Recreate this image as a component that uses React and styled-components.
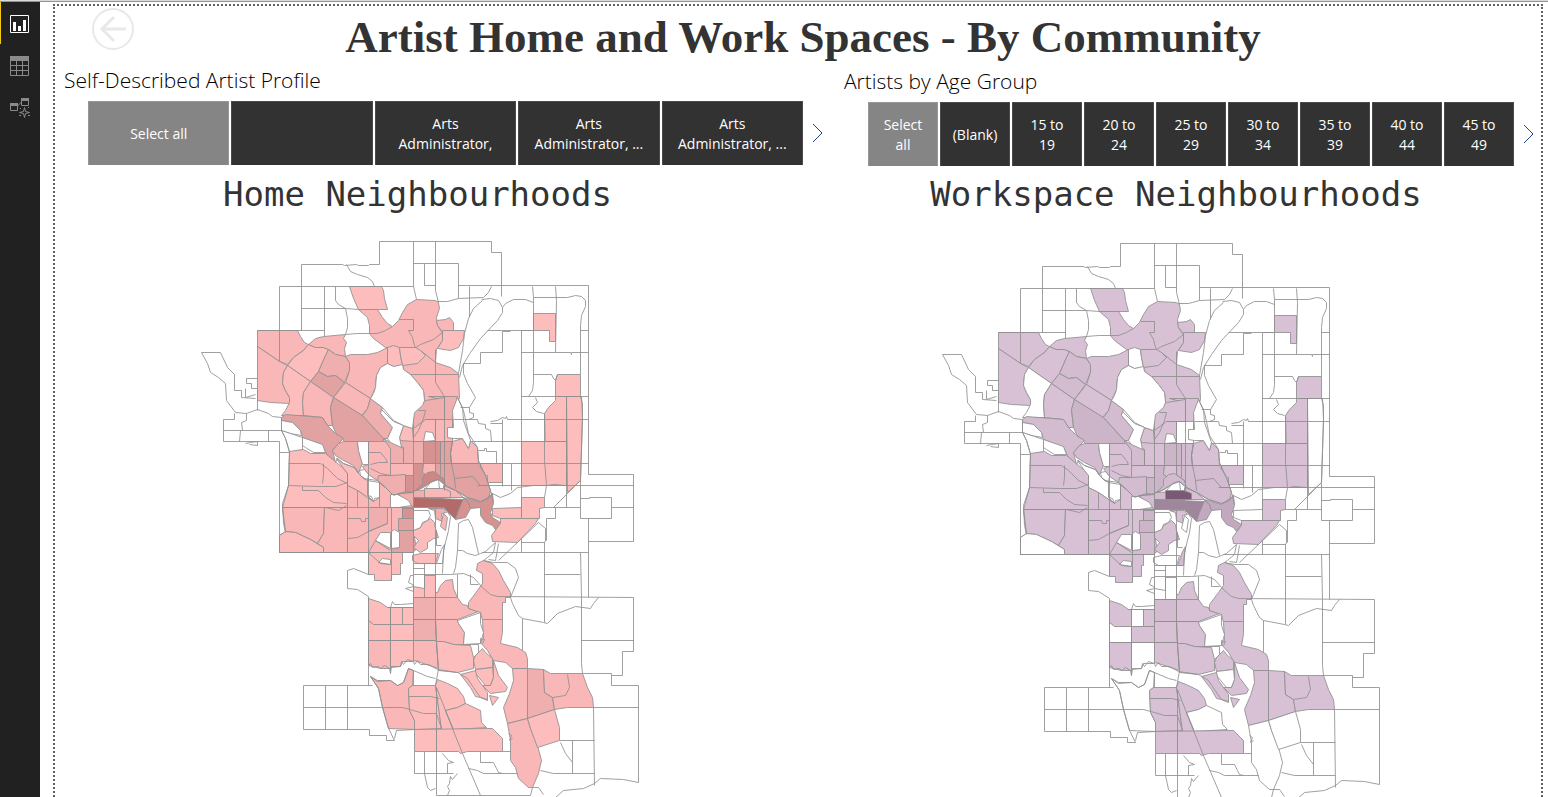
import React from "react";
import styled, { createGlobalStyle } from "styled-components";

const GlobalStyle = createGlobalStyle`
  * { box-sizing: border-box; }
  html, body { margin: 0; padding: 0; background: #fff; }
  body { overflow: hidden; font-family: "Open Sans", "Noto Sans", sans-serif; color: #333; }
  button { font: inherit; border: 0; padding: 0; margin: 0; background: none; cursor: pointer; }
`;

const Page = styled.div`
  display: flex;
  flex-direction: column;
  height: 100vh;
`;

const TopEdge = styled.div`
  flex: none;
  height: 2px;
  background: #d9d9d9;
  border-bottom: 1px solid #959595;
`;

const Body = styled.div`
  flex: 1;
  min-height: 0;
  display: flex;
`;

const Sidebar = styled.nav`
  flex: none;
  width: 40px;
  background: #212121;
  display: flex;
  flex-direction: column;
`;

const ViewButton = styled.button`
  height: 42px;
  width: 40px;
  display: flex;
  align-items: center;
  padding-top: 2px;
  padding-left: 9px;
  border-left: 1px solid ${(p) => (p.$active ? "#f2c811" : "transparent")};
  color: ${(p) => (p.$active ? "#fff" : "#8a8a8a")};
`;

const Canvas = styled.main`
  flex: 1;
  min-width: 0;
  margin: 2px 5px 0 13px;
  border: 2px dotted #606060;
  border-bottom: 0;
  overflow: hidden;
`;

const Header = styled.header`
  display: grid;
  grid-template-columns: 42px 1fr 69px;
  padding-left: 37px;
  height: 59px;
  align-items: start;
`;

const BackButton = styled.button`
  width: 42px;
  height: 42px;
  margin-top: 2px;
`;

const Title = styled.h1`
  margin: 0;
  text-align: center;
  font-family: "Liberation Serif", serif;
  font-weight: 700;
  font-size: 45px;
  line-height: 62px;
  color: #333;
  white-space: nowrap;
`;

const Slicers = styled.div`
  display: grid;
  grid-template-columns: 780fr 697fr;
  padding-left: 9px;
`;

const Slicer = styled.section`
  padding-top: ${(p) => p.$drop || 0}px;
`;

const SlicerTitle = styled.h2`
  margin: 0;
  font-weight: 300;
  font-size: 21px;
  line-height: 30px;
  color: #000;
`;

const SlicerRow = styled.div`
  display: flex;
  align-items: center;
  padding-left: 24px;
  padding-right: ${(p) => p.$end}px;
  margin-top: 6px;
`;

const Tiles = styled.div`
  flex: 1;
  display: grid;
  grid-auto-flow: column;
  grid-auto-columns: 1fr;
  gap: 2px;
`;

const Tile = styled.button`
  height: 64px;
  background: ${(p) => (p.$selected ? "#858585" : "#323232")};
  border: 1px solid ${(p) => (p.$selected ? "#979797" : "#4a4a4a")};
  border-bottom: 0;
  color: #fff;
  font-size: 14px;
  line-height: 20px;
  text-align: center;
`;

const NextButton = styled.button`
  width: 12px;
  height: 22px;
  margin-left: 9px;
`;

const Maps = styled.div`
  display: grid;
  grid-template-columns: 1fr 1fr;
`;

const MapPanel = styled.section`
  padding-right: ${(p) => p.$end}px;
`;

const MapTitle = styled.h2`
  margin: 0;
  height: ${(p) => p.$height}px;
  padding-left: ${(p) => p.$before || 0}px;
  padding-right: ${(p) => p.$after || 0}px;
  text-align: center;
  font-family: "DejaVu Sans Mono", monospace;
  font-weight: 400;
  font-size: 34px;
  line-height: 56px;
  color: #333;
  white-space: nowrap;
`;

const MapSvg = styled.svg`
  display: block;
  margin: 0 auto;
  width: 440px;
  height: 557px;
`;

/* Colour scales of the two maps, from the lightest to the strongest count. */
const HOME = ["#fff", "#fdbdbd", "#f9b7b7", "#efafaf", "#e1a2a1", "#d59290", "#cc8887", "#b36b6a"];
const WORK = ["#fff", "#d8c1d5", "#d3bbd0", "#ccb4c9", "#c3a9c0", "#a68ea3", "#9f869c", "#7b5876"];

/* Each area: outline, home level, workspace level. */
const AREAS = [
  // north west
  ["349,286 381,286 383,290 384,298 387,309 358,309 353,298", 1, 1],
  ["358,309 377,309 382,317 387,323 392,326 398,320 402,312 407,304 416,299 435,300 438,302 439,308 436,317 437,325 442,333 442,340 436,349 435,362 450,367 458,373 459,397 457,403 453,412 452,441 413,441 412,428 414,412 422,405 424,400 423,390 417,382 410,374 403,369 402,364 393,366 387,363 387,347 385,347 373,338 369,333 369,325 367,317", 2, 1],
  ["387,347 393,345 399,347 400,355 402,365 393,366 387,363", 1, 0],
  ["399,347 415,347 420,350 425,355 417,363 402,365 400,355", 1, 1],
  ["436,320 445,319 449,317 453,322 453,330 442,331 437,325", 2, 1],
  ["442,330 464,330 463,338 458,347 450,350 437,348 442,340", 1, 1],
  ["257,330 297,330 300,336 304,342 308,344 303,350 293,357 287,364 279,361 257,346", 2, 1],
  ["257,346 279,361 287,365 283,372 282,383 285,390 289,397 289,403 270,402 257,400", 2, 1],
  ["287,365 293,357 303,350 308,344 315,347 323,347 328,349 325,355 318,371 310,381", 1, 1],
  ["287,365 310,381 303,392 302,402 303,415 281,415 285,410 289,402 289,397 285,390 282,383 283,372", 1, 0],
  ["308,344 315,338 323,336 345,334 343,338 346,342 344,348 345,356 335,354 328,349 323,347 315,347", 2, 1],
  ["328,349 335,354 345,356 349,362 349,370 344,382 335,375 327,376 318,371 325,355", 3, 2],
  ["318,371 327,376 335,375 344,382 333,397 310,381", 4, 2],
  ["345,356 350,354 367,354 377,352 387,347 387,363 380,367 376,375 375,387 370,398 345,382 349,370 349,362", 2, 1],
  ["345,382 370,398 367,408 361,415 333,397", 2, 1],
  ["310,381 333,397 330,407 332,425 327,425 322,417 303,415 302,402 303,392", 2, 1],
  ["333,397 362,415 383,438 383,441 344,441 335,432 332,425 330,407", 4, 3],
  ["370,398 382,407 380,413 392,427 387,438 383,438 362,415 367,408", 3, 2],
  ["281,417 285,414 310,416 322,417 327,425 335,433 343,438 338,443 332,450 335,462 327,455 322,445 310,440 302,437 300,430 292,422 281,420", 4, 2],
  ["343,441 357,441 358,450 362,463 358,472 353,465 343,460 335,455 332,450 338,443", 3, 2],
  // west
  ["289,450 303,449 310,453 325,453 336,462 343,468 347,473 347,552 279,552 279,535 285,531 282,507 288,485", 1, 1],
  ["282,507 324,507 323,533 317,543 310,539 295,532 285,531", 2, 1],
  ["324,507 347,507 347,552 323,552 323,547 317,543 323,533", 2, 1],
  ["279,535 285,531 295,532 310,539 323,547 323,552 279,552", 1, 0],
  ["336,458 343,463 354,467 358,473 363,478 367,480 367,495 373,501 357,490 347,485 347,473 343,468", 1, 0],
  ["347,485 357,490 373,501 379,497 379,482 385,487 393,495 413,492 413,552 347,552", 2, 1],
  ["368,441 383,441 390,442 401,447 403,463 413,463 413,492 393,495 385,487 377,480 368,474 362,466 368,464", 2, 1],
  ["383,438 390,442 392,442 403,447 403,463 390,463 390,448", 3, 2],
  ["378,475 390,475 405,474 405,491 393,495 385,487 377,480", 3, 2],
  ["403,425 412,428 413,441 423,445 418,452 410,452 401,447 399,437", 1, 1],
  ["392,442 400,440 413,441 423,441 423,463 403,463 403,447", 3, 1],
  ["368,507 387,507 387,523 368,531", 3, 1],
  ["402,508 413,508 413,518 402,518", 5, 3],
  ["398,518 413,518 413,530 398,530", 4, 3],
  ["398,530 413,530 415,543 418,547 412,552 391,552 391,548 399,547", 4, 2],
  ["368,552 402,552 402,563 400,563 400,574 391,574 391,580 374,580 374,574 368,574", 1, 1],
  // centre
  ["428,396 457,396 456,403 453,412 452,420 444,420 444,400", 3, 1],
  ["413,410 425,400 444,397 444,419 425,419 413,428", 3, 1],
  ["435,419 452,419 452,441 435,441", 2, 0],
  ["423,441 440,441 440,463 423,463", 5, 3],
  ["440,441 452,441 450,453 451,463 440,463", 4, 2],
  ["452,441 462,438 468,448 470,440 477,447 478,463 451,463 450,453", 2, 1],
  ["480,463 502,463 502,482 487,482 487,475 480,475", 2, 1],
  ["405,475 413,475 413,463 423,463 422,472 427,475 422,483 413,492 405,491", 5, 3],
  ["423,463 435,463 435,472 427,475 422,472", 2, 1],
  ["422,483 422,477 427,472 433,471 443,478 445,485 438,479 430,482 413,492", 6, 2],
  ["435,463 478,463 485,475 490,490 488,498 480,501 467,497 455,490 445,485 443,478 435,472", 4, 2],
  ["413,490 443,489 443,498 413,497", 3, 2],
  ["398,493 413,492 413,507 407,502 402,498", 3, 2],
  ["443,485 455,490 463,497 443,497", 2, 1],
  ["424,488 443,488 450,491 450,497 424,497", 2, 7],
  ["413,497 463,499 458,510 455,519 443,507 413,507", 7, 6],
  ["463,498 468,502 470,508 465,517 455,519 458,510", 5, 4],
  ["463,497 480,502 487,497 492,493 493,503 490,512 492,517 500,522 495,529 492,525 485,522 480,515 480,507 470,508 468,502", 5, 4],
  ["428,508 443,508 446,512 441,513 442,521 435,518 434,510", 3, 1],
  ["443,513 447,517 445,530 440,526", 2, 0],
  ["422,523 430,518 434,522 435,528 438,537 433,538 427,542 427,548 420,552 413,547 418,540 413,535 413,530 420,527", 1, 1],
  ["412,555 420,553 438,553 435,563 417,563 412,560", 1, 0],
  ["441,549 444,544 442,563 436,563", 0, 2],
  // east
  ["533,313 555,313 555,341 549,341 549,330 533,330", 1, 1],
  ["557,374 580,374 580,396 555,396 555,380", 1, 1],
  ["555,396 566,396 566,485 546,485 544,413 548,407 555,400", 1, 1],
  ["566,396 581,396 582,417 580,480 567,492", 1, 0],
  ["521,441 566,441 566,485 521,485", 1, 1],
  ["521,497 544,497 544,507 539,508 539,518 521,518", 1, 1],
  ["492,508 521,507 521,518 500,518 492,515", 1, 0],
  ["500,518 538,518 535,523 517,542 492,541 491,535 500,523", 1, 1],
  // south
  ["368,598 380,602 387,607 390,607 390,624 373,624 368,620", 1, 1],
  ["390,607 402,607 402,624 390,624", 1, 0],
  ["402,607 413,607 413,624 402,624", 1, 1],
  ["368,620 373,624 390,624 390,640 368,640", 1, 0],
  ["390,624 413,624 413,640 390,640", 1, 1],
  ["368,640 390,640 390,668 380,668 368,665", 2, 1],
  ["390,640 413,640 413,661 402,661 400,666 390,667", 1, 0],
  ["424,575 435,575 435,597 413,597 413,586 424,588", 1, 0],
  ["413,597 435,597 435,619 413,619", 3, 2],
  ["413,619 435,619 436,640 413,640", 3, 1],
  ["413,640 436,640 438,668 420,662 413,660", 2, 1],
  ["437,592 440,585 445,580 452,579 453,588 457,597 462,604 467,605 468,608 478,611 457,619 435,619 435,592", 2, 1],
  ["435,619 457,619 458,623 464,632 463,644 453,644 443,641 436,641", 2, 1],
  ["436,641 443,641 453,644 470,645 473,657 473,668 457,672 438,670", 1, 1],
  ["477,563 483,560 492,563 498,570 503,580 510,592 510,597 505,597 505,602 502,602 502,632 500,643 517,647 525,652 527,658 527,668 512,668 505,662 493,660 487,650 480,642 483,638 482,620 480,612 468,608 468,602 477,590 482,583 482,573 476,570", 2, 1],
  ["473,660 475,655 482,648 485,652 492,658 492,667 475,669", 1, 1],
  ["475,669 492,667 493,677 490,685 485,685 475,673", 1, 0],
  ["493,660 498,675 507,687 505,691 490,693 482,685 490,685 493,677", 1, 1],
  ["460,674 475,670 477,678 487,692 487,700 480,697 475,696 470,687", 1, 1],
  ["489,695 498,697 492,705", 1, 1],
  ["370,676 377,680 390,680 397,685 403,682 408,668 413,670 412,685 408,688 409,710 414,720 414,729 388,728 382,707 378,688", 2, 0],
  ["412,685 435,685 441,728 414,729 414,720 409,710 408,688", 1, 1],
  ["437,679 447,683 457,688 463,696 465,703 457,707 445,710 453,729 441,729 435,685", 1, 1],
  ["445,710 457,707 465,703 480,710 481,722 486,727 453,729", 1, 0],
  ["414,729 486,728 492,728 502,738 502,751 467,751 460,753 458,751 414,751", 1, 1],
  ["512,668 527,668 527,718 507,723 503,707 509,693 513,680", 2, 1],
  ["507,723 527,718 530,728 537,745 541,760 538,773 532,787 528,787 518,778 515,767 510,760 510,740", 2, 0],
  ["527,668 543,669 544,692 552,697 554,709 527,718", 3, 1],
  ["543,669 550,673 582,673 587,687 592,697 593,707 567,707 554,709 552,697 544,692", 2, 1],
  ["527,718 554,709 559,727 559,740 537,747 530,728", 1, 0],
];

/* Green space, water and rail land: never filled. */
const HOLES = [
  "387,363 393,366 402,364 403,369 410,374 417,382 423,390 424,400 422,405 414,412 412,428 403,425 393,420 382,407 370,398 373,393 375,387 376,375 380,367",
  "381,409 380,413 392,427 387,438 390,442 401,447 399,437 403,425 393,421",
  "281,420 292,422 300,430 301,435 290,433 281,430",
  "281,430 293,434 302,437 302,449 289,451 285,438",
  "302,437 322,444 325,452 313,452 305,447 302,445",
  "357,441 368,441 368,464 362,464 358,450",
  "359,470 364,469 368,474 367,480 360,475",
  "367,480 379,482 379,497 374,498 373,501 371,496 367,495",
  "425,431 432,432 435,440 423,441",
  "453,427 447,427 447,437 453,438 462,438 468,448 470,440 463,420 462,407 457,397 452,410",
  "430,482 438,479 439,488 425,488",
  "390,494 397,494 408,500 411,505 398,507 390,507",
  "413,510 428,510 430,515 427,520 422,522 420,527 413,530",
  "391,531 394,529 399,532 399,547 391,548",
  "375,540 380,532 390,532 390,548",
  "378,562 382,558 390,559 390,564",
  "457,620 480,612 480,623 483,632 480,643 463,644 464,632 458,623",
];

/* Boundaries that are not the edge of an area above. */
const LINES = [
  "301,330 301,264 342,264 344,265 356,264 358,265 368,265 369,264 379,264 379,241 491,241 491,252 501,252 501,296",
  "413,241 413,286 416,299", "435,241 435,290 438,302",
  "413,263 458,263 458,298", "424,263 424,285 435,285",
  "279,361 279,286 413,286", "458,285 588,285 588,474 633,474 633,541 588,541",
  "346,264 350,271 357,274 367,277 372,281 374,286",
  "324,286 324,336", "335,286 335,300 338,304 345,308 347,318 347,327 345,334",
  "301,308 345,308 358,309", "257,330 324,330",
  "345,334 357,333 377,333 385,330 392,326",
  "399,319 413,319 413,330 408,330 412,337 414,345 415,347 420,344 433,339 442,332",
  "420,350 435,362", "435,349 435,382 440,390 444,396", "410,374 458,374",
  "491,286 488,292 483,297 458,298 447,301 437,301", "469,286 469,317",
  "482,300 473,308 468,318 464,333 462,350 458,373",
  "481,299 490,298 498,300 502,307 505,303 513,299 525,299 533,302",
  "502,307 502,312 497,320 480,338 470,352 462,365 459,377",
  "487,330 533,330", "510,331 502,331 502,352 480,352 480,363 463,363 463,373 467,383 475,397 469,407 460,407", "469,407 469,412 473,413 473,417 468,419",
  "521,330 521,507", "532,286 533,297 533,382 532,390 528,396", "555,286 556,300 555,352",
  "533,297 567,297 575,295 581,296 585,300 585,306 581,315 580,325 580,374", "521,330 533,330",
  "521,352 570,352 571,354 571,352 588,352", "533,374 551,374 553,378 555,380 557,374", "521,396 588,396", "580,330 588,330",
  "535,397 537,402 532,407 536,411 543,413", "453,419 477,419 478,423 485,424 485,428 490,430 491,441",
  "490,423 502,423", "490,421 497,420 502,417 505,418 506,416 507,419 588,419", "471,441 566,441",
  "502,419 502,486", "478,463 588,463", "478,450 484,450 484,448 486,448 486,451 496,451 496,463",
  "511,463 511,490", "477,485 521,485",
  "490,492 500,497 510,493 517,487 533,485 547,485 553,484 565,485 633,485", "544,413 544,460 546,485 544,497", "566,396 566,507",
  "580,396 582,403 582,417 580,480 553,507", "580,480 580,518 611,518 611,497 589,497 589,498 580,498", "611,507 633,507", "544,507 580,507",
  "555,507 555,518 546,518 546,540", "538,522 498,560", "538,522 545,528 545,541", "521,542 544,542", "521,538 521,552",
  "482,552 588,552", "544,541 544,622", "544,574 580,574", "580,552 581,597 581,663 582,673", "588,518 588,597",
  "457,397 463,410 468,433 477,447 478,460 485,475 490,490 493,502",
  "444,396 444,490", "435,419 435,472", "440,441 440,475", "452,441 450,453 451,463 454,478 455,488", "454,478 472,476 480,485 488,485", "423,441 452,441", "413,463 478,463",
  // west edge
  "220,352 201,352 207,363 210,372 218,377 225,383 226,400 235,412 246,413 257,409 268,413 272,416 281,417",
  "220,352 227,367 234,374 234,390 241,390 241,397 255,398", "257,378 246,378 246,383 251,383 251,388 257,388", "245,388 245,397 255,394", "257,390 257,410",
  "234,413 234,419 223,419 223,441 279,441", "223,430 281,430", "268,430 268,441", "246,413 246,420 241,422 242,430", "240,430 239,441", "245,443 250,442 257,441 257,445 249,444",
  "281,417 281,430 285,438 289,452 288,485 282,503 283,523 285,532", "279,441 279,552", "279,452 289,452",
  "288,463 320,463 327,468 337,478 347,483", "323,463 323,475 322,483", "288,485 317,486 335,486 347,482",
  "302,486 302,490 318,490 325,497 333,502 346,503", "325,507 338,510 346,505", "282,507 413,507",
  "347,473 347,552", "357,490 357,507", "368,441 368,507 368,574", "347,518 360,518 361,521 365,521 365,518 368,518",
  "347,538 357,537 368,531 387,523", "368,452 380,452 385,458 387,462 378,462 370,464", "390,463 413,463", "370,468 380,473 390,475", "390,463 390,475", "379,482 379,507",
  "387,507 402,507 402,518", "375,540 390,550", "368,552 375,540", "368,552 380,563 390,564", "391,507 391,580", "279,552 413,552",
  // river
  "335,462 337,458 343,463 354,467 358,473 363,478 377,480 385,487 393,495 398,493 410,492 423,487 433,480 438,479 445,485 455,490 467,497 480,501 488,498 492,493",
  "413,428 413,620", "418,410 425,410 423,418 418,430 413,437", "425,419 444,419", "403,447 403,463",
  "444,507 450,516 448,530 443,550 442,573", "463,520 458,523 457,550 455,567 453,573", "463,520 468,519 472,527 478,553",
  "457,550 462,550 467,553 475,555 480,553 485,551 495,542 493,552 487,557 483,560", "498,543 495,560 488,559",
  "435,508 435,563", "436,530 436,545 441,545", "413,563 442,563", "413,568 424,568", "413,574 450,574 463,573 473,577 482,587 490,594 497,596 633,597 633,651 622,651 622,675 611,675",
  "424,563 424,597", "435,563 435,620 436,643 438,668 435,685", "457,574 457,597", "470,574 470,584 478,584",
  "413,575 410,575 408,582 412,584 413,586 405,588 413,591", "413,597 457,597", "413,619 457,619",
  "347,570 353,568 368,574", "347,570 347,588 357,589 368,596 368,685", "390,607 392,601 394,604 400,604 413,603", "387,607 413,607",
  "483,560 493,562 507,562 515,568 518,577 512,592 510,597 512,603 518,615 522,618 522,650", "522,618 543,622 547,623 557,613 575,606 590,608 593,603 598,597",
  "482,619 502,619", "463,644 478,644 478,652 473,657", "480,643 480,638 484,639 482,643",
  "368,640 436,640", "581,640 633,640", "582,673 611,673 611,685 638,685 638,782 623,779 600,778 594,783 583,788 563,790 555,797",
  "593,707 594,785", "593,707 638,707", "567,674 569,687 565,695 552,697",
  "559,740 594,740", "560,742 565,753 572,762", "572,740 572,773", "540,770 553,773 594,773",
  "532,787 538,787 543,794", "532,787 530,795 436,795 436,729",
  // river valley in the south
  "368,665 370,663 372,667 378,666 380,668 384,665 389,668 390,673 391,666 400,666 401,661 403,664 407,659 413,661 414,664 417,660 420,664 428,664 437,669 457,672 467,678 473,687 480,697 487,699",
  "370,676 377,681 390,680 397,685 403,682 408,668 413,670 427,676 435,678", "413,670 413,685", "390,607 390,673",
  "303,685 372,685", "303,685 303,729 369,729 369,735 386,735 386,740 394,740 388,728", "394,738 396,730 414,729",
  "370,676 378,688 382,707 388,728",
  "325,685 325,729", "347,685 347,729", "303,707 402,707 413,710 423,713 436,713 441,728", "408,696 430,696 439,698",
  "436,687 452,728 462,753 480,795", "436,687 436,751", "414,751 414,773 453,773", "424,751 424,773 427,787 430,790 435,788",
  "442,753 448,760 453,762 447,763 447,773", "457,773 452,779 450,776 449,783 447,786 449,790 447,795",
  "468,768 477,770 483,773 517,773", "480,751 480,762 493,762 496,768 498,772 502,773", "502,751 510,751",
  "508,733 511,735 509,740 512,738",
];

function CommunityMap({ scale, level, label }) {
  return (
    <MapSvg viewBox="200 240 440 557" role="img" aria-label={label}>
      <g transform="translate(0.5 0.5)" stroke="#8f8f8f" strokeOpacity="0.85" strokeWidth="1" strokeLinejoin="round">
        {AREAS.map((a) => (
          <polygon key={a[0]} points={a[0]} fill={scale[a[level]]} />
        ))}
        {HOLES.map((p) => (
          <polygon key={p} points={p} fill="#fff" />
        ))}
        {LINES.map((p) => (
          <polyline key={p} points={p} fill="none" />
        ))}
      </g>
    </MapSvg>
  );
}

function ReportIcon() {
  return (
    <svg width="20" height="20" viewBox="0 0 20 20" fill="none" stroke="currentColor" aria-hidden="true">
      <path d="M.5 1.500h18v17H.5z" />
      <path fill="currentColor" stroke="none" d="M3 8h3v9H3zM8 12h3v5H8zM13 6h3v11h-3z" />
    </svg>
  );
}

function TableIcon() {
  return (
    <svg width="20" height="20" viewBox="0 0 20 20" fill="none" stroke="currentColor" aria-hidden="true">
      <path fill="currentColor" stroke="none" d="M0 0h19v5H0z" />
      <path d="M.5.5h18v19H.5zM.5 9.500h18M.5 14.500h18M6.500 5v15M12.500 5v15" />
    </svg>
  );
}

function ModelIcon() {
  return (
    <svg width="20" height="20" viewBox="0 0 20 20" fill="none" stroke="currentColor" aria-hidden="true">
      <path d="M.5 5.500h7v7h-7zM11.500.5h7v7h-7zM7.500 8l4-4" />
      <path fill="currentColor" stroke="none" d="M0 5h8v3H0zM11 0h8v3h-8z" />
      <path d="M14.500 9.500l1 4 4 1-4 1-1 4-1-4-4-1 4-1z" />
      <path fill="currentColor" stroke="none" d="M10 10h1v1h-1zM18 9h1v1h-1zM9 17h2v1H9zM18 17h2v1h-2z" />
    </svg>
  );
}

function BackIcon() {
  return (
    <svg width="42" height="42" viewBox="0 0 42 42" fill="none" stroke="#e8e8e8" strokeWidth="3" aria-hidden="true">
      <circle cx="21" cy="21" r="20" strokeWidth="2" />
      <path d="M34 21H10M22 9L10 21l12 12" />
    </svg>
  );
}

function NextIcon() {
  return (
    <svg width="12" height="22" viewBox="0 0 12 22" fill="none" stroke="#1d4583" strokeWidth="1" aria-hidden="true">
      <path d="M1 2l9 9-9 9" />
    </svg>
  );
}

const PROFILES = [
  ["Select all"],
  [""],
  ["Arts", "Administrator,"],
  ["Arts", "Administrator, ..."],
  ["Arts", "Administrator, ..."],
];

const AGES = [
  ["Select", "all"],
  ["(Blank)"],
  ["15 to", "19"],
  ["20 to", "24"],
  ["25 to", "29"],
  ["30 to", "34"],
  ["35 to", "39"],
  ["40 to", "44"],
  ["45 to", "49"],
];

function TileSlicer({ title, items, drop, end }) {
  return (
    <Slicer $drop={drop}>
      <SlicerTitle>{title}</SlicerTitle>
      <SlicerRow $end={end}>
        <Tiles>
          {items.map((lines, i) => (
            <Tile key={i} $selected={i === 0} aria-label={lines.join(" ") || "Empty profile"}>
              {lines.map((line, n) => (
                <React.Fragment key={n}>
                  {n > 0 && <br />}
                  {line}
                </React.Fragment>
              ))}
            </Tile>
          ))}
        </Tiles>
        <NextButton aria-label="Next values">
          <NextIcon />
        </NextButton>
      </SlicerRow>
    </Slicer>
  );
}

export default function App() {
  return (
    <Page>
      <GlobalStyle />
      <TopEdge />
      <Body>
        <Sidebar>
          <ViewButton $active aria-label="Report view"><ReportIcon /></ViewButton>
          <ViewButton aria-label="Data view"><TableIcon /></ViewButton>
          <ViewButton aria-label="Model view"><ModelIcon /></ViewButton>
        </Sidebar>
        <Canvas>
          <Header>
            <BackButton aria-label="Back"><BackIcon /></BackButton>
            <Title>Artist Home and Work Spaces - By Community</Title>
          </Header>
          <Slicers>
            <TileSlicer title="Self-Described Artist Profile" items={PROFILES} end={20} />
            <TileSlicer title="Artists by Age Group" items={AGES} drop={1} end={6} />
          </Slicers>
          <Maps>
            <MapPanel $end={14}>
              <MapTitle $height={74} $after={4}>Home Neighbourhoods</MapTitle>
              <CommunityMap scale={HOME} level={1} label="Home neighbourhoods by community" />
            </MapPanel>
            <MapPanel $end={17}>
              <MapTitle $height={76} $before={30}>Workspace Neighbourhoods</MapTitle>
              <CommunityMap scale={WORK} level={2} label="Workspace neighbourhoods by community" />
            </MapPanel>
          </Maps>
        </Canvas>
      </Body>
    </Page>
  );
}
